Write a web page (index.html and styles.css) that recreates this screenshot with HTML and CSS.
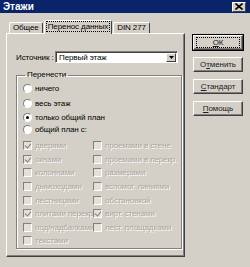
FILE: index.html
```html
<!DOCTYPE html>
<html lang="ru">
<head>
    <meta charset="UTF-8">
    <title>Этажи</title>
    <link rel="stylesheet" href="styles.css">
</head>
<body>
    <div class="window">
        <div class="titlebar">
            <span class="title">Этажи</span>
            <span class="close">
                <svg width="8" height="7" viewBox="0 0 8 7"><path d="M0.5 0.5 L7.5 6.5 M7.5 0.5 L0.5 6.5" stroke="#000" stroke-width="1.6"/></svg>
            </span>
        </div>
        <div class="client">
            <div class="tabs-col">
                <div class="tabs">
                    <div class="tab">Общее</div>
                    <div class="tab active"><span class="focus">Перенос данных</span></div>
                    <div class="tab">DIN 277</div>
                </div>
                <div class="panel">
                    <div class="source-row">
                        <span class="label">Источник :</span>
                        <div class="combo">
                            <span class="combo-text">Первый этаж</span>
                            <span class="drop">
                                <svg width="5" height="3" viewBox="0 0 5 3"><path d="M0 0 H5 L2.5 3 Z" fill="#000"/></svg>
                            </span>
                        </div>
                    </div>
                    <fieldset class="group">
                        <legend>Перенести</legend>
                        <div class="radio r-first"><span class="rb"></span>ничего</div>
                        <div class="radio r-gap"><span class="rb"></span>весь этаж</div>
                        <div class="radio"><span class="rb checked"></span>только общий план</div>
                        <div class="radio"><span class="rb"></span>общий план с:</div>
                        <div class="checks">
                            <div class="check"><span class="cb on"></span>дверями</div>
                            <div class="check"><span class="cb"></span>проемами в стене</div>
                            <div class="check"><span class="cb on"></span>окнами</div>
                            <div class="check"><span class="cb"></span>проемами в перекр.</div>
                            <div class="check"><span class="cb"></span>колоннами</div>
                            <div class="check"><span class="cb"></span>размерами</div>
                            <div class="check"><span class="cb"></span>дымоходами</div>
                            <div class="check"><span class="cb"></span>вспомог. линиями</div>
                            <div class="check"><span class="cb"></span>лестницами</div>
                            <div class="check"><span class="cb"></span>обстановкой</div>
                            <div class="check"><span class="cb on"></span>плитами перекр.</div>
                            <div class="check"><span class="cb on"></span>вирт. стенами</div>
                            <div class="check"><span class="cb"></span>под/надбалками</div>
                            <div class="check"><span class="cb"></span>лест. площадками</div>
                            <div class="check"><span class="cb"></span>текстами</div>
                        </div>
                    </fieldset>
                </div>
            </div>
            <div class="buttons">
                <div class="btn default"><span class="btn-focus"><u>О</u>К</span></div>
                <div class="btn">О<u>т</u>менить</div>
                <div class="btn"><u>С</u>тандарт</div>
                <div class="btn"><u>П</u>омощь</div>
            </div>
        </div>
    </div>
</body>
</html>
```

FILE: styles.css
```css
* {
    box-sizing: border-box;
}
body {
    margin: 0;
    background-color: #d4d0c8;
    font-family: 'Liberation Sans', Arial, sans-serif;
    font-size: 8px;
    letter-spacing: -0.1px;
    color: #000;
}
.window {
    width: 250px;
    height: 267px;
    overflow: hidden;
    background-color: #d4d0c8;
}
.titlebar {
    height: 13px;
    background-color: #0a246a;
    display: flex;
    align-items: center;
    justify-content: space-between;
    padding: 0 4px 0 3px;
}
.title {
    color: #fff;
    font-weight: bold;
    font-size: 10px;
    letter-spacing: 0;
}
.close {
    width: 14px;
    height: 10px;
    background-color: #d4d0c8;
    border: 1px solid;
    border-color: #fff #404040 #404040 #fff;
    display: flex;
    align-items: center;
    justify-content: center;
}
.client {
    display: flex;
    padding: 7px 0 0 6px;
}
.tabs-col {
    width: 179px;
}
.tabs {
    display: flex;
    align-items: flex-end;
    height: 13px;
    padding-left: 3px;
}
.tab {
    height: 11px;
    padding: 0 3px;
    border: 1px solid;
    border-bottom: none;
    border-color: #fff #404040 transparent #fff;
    border-radius: 2px 2px 0 0;
    line-height: 10px;
    margin-right: 1px;
}
.tab.active {
    height: 14px;
    line-height: 12px;
    position: relative;
    top: 1px;
    background-color: #d4d0c8;
    z-index: 1;
    padding: 0 2px;
}
.focus {
    outline: 1px dotted #000;
    padding: 0 1px;
}
.panel {
    height: 224px;
    border: 1px solid;
    border-color: #fff #404040 #404040 #fff;
    box-shadow: inset -1px -1px 0 #808080;
    padding: 17px 6px 0 9px;
}
.source-row {
    display: flex;
    align-items: center;
    height: 12px;
}
.label {
    width: 39px;
    white-space: nowrap;
}
.combo {
    width: 123px;
    height: 12px;
    background-color: #fff;
    border: 1px solid;
    border-color: #808080 #fff #fff #808080;
    box-shadow: inset 1px 1px 0 #404040;
    display: flex;
    align-items: center;
    justify-content: space-between;
    padding: 0 1px 0 3px;
}
.drop {
    width: 10px;
    height: 9px;
    background-color: #d4d0c8;
    border: 1px solid;
    border-color: #fff #404040 #404040 #fff;
    display: flex;
    align-items: center;
    justify-content: center;
}
.group {
    margin: 7px 0 0 0;
    padding: 2px 4px 0 6px;
    height: 179px;
    border: 1px solid #808080;
    box-shadow: 1px 1px 0 #fff, inset 1px 1px 0 #fff;
}
.group legend {
    padding: 0 2px;
    margin-left: 2px;
    line-height: 10px;
}
.radio {
    display: flex;
    align-items: center;
    height: 12px;
}
.r-first {
    margin-bottom: 3px;
}
.r-gap {
    margin-bottom: 2px;
}
.rb {
    width: 9px;
    height: 9px;
    border-radius: 50%;
    background-color: #fff;
    border: 1px solid;
    border-color: #808080 #fff #fff #808080;
    margin-right: 3px;
    position: relative;
}
.rb.checked::after {
    content: "";
    position: absolute;
    left: 2px;
    top: 2px;
    width: 3px;
    height: 3px;
    border-radius: 50%;
    background-color: #000;
}
.checks {
    display: grid;
    grid-template-columns: 70px 1fr;
    grid-auto-rows: 13.6px;
    margin-top: 4px;
    color: #aaa69e;
    text-shadow: 1px 1px 0 #fff;
}
.check {
    display: flex;
    align-items: center;
    white-space: nowrap;
}
.cb {
    width: 9px;
    height: 9px;
    background-color: #e4e0d8;
    border: 1px solid;
    border-color: #808080 #fff #fff #808080;
    margin-right: 3px;
    position: relative;
    flex-shrink: 0;
}
.cb.on::after {
    content: "";
    position: absolute;
    left: 2px;
    top: 0;
    width: 3px;
    height: 5px;
    border: solid #808080;
    border-width: 0 1.5px 1.5px 0;
    transform: rotate(40deg);
}
.buttons {
    display: flex;
    flex-direction: column;
    gap: 7px;
    padding: 15px 0 0 8px;
}
.btn {
    width: 50px;
    height: 15px;
    border: 1px solid;
    border-color: #fff #404040 #404040 #fff;
    box-shadow: inset -1px -1px 0 #808080;
    display: flex;
    align-items: center;
    justify-content: center;
    color: #202020;
}
.btn.default {
    outline: 1px solid #000;
}
.btn-focus {
    width: 42px;
    height: 9px;
    outline: 1px dotted #000;
    display: flex;
    align-items: center;
    justify-content: center;
}
```
